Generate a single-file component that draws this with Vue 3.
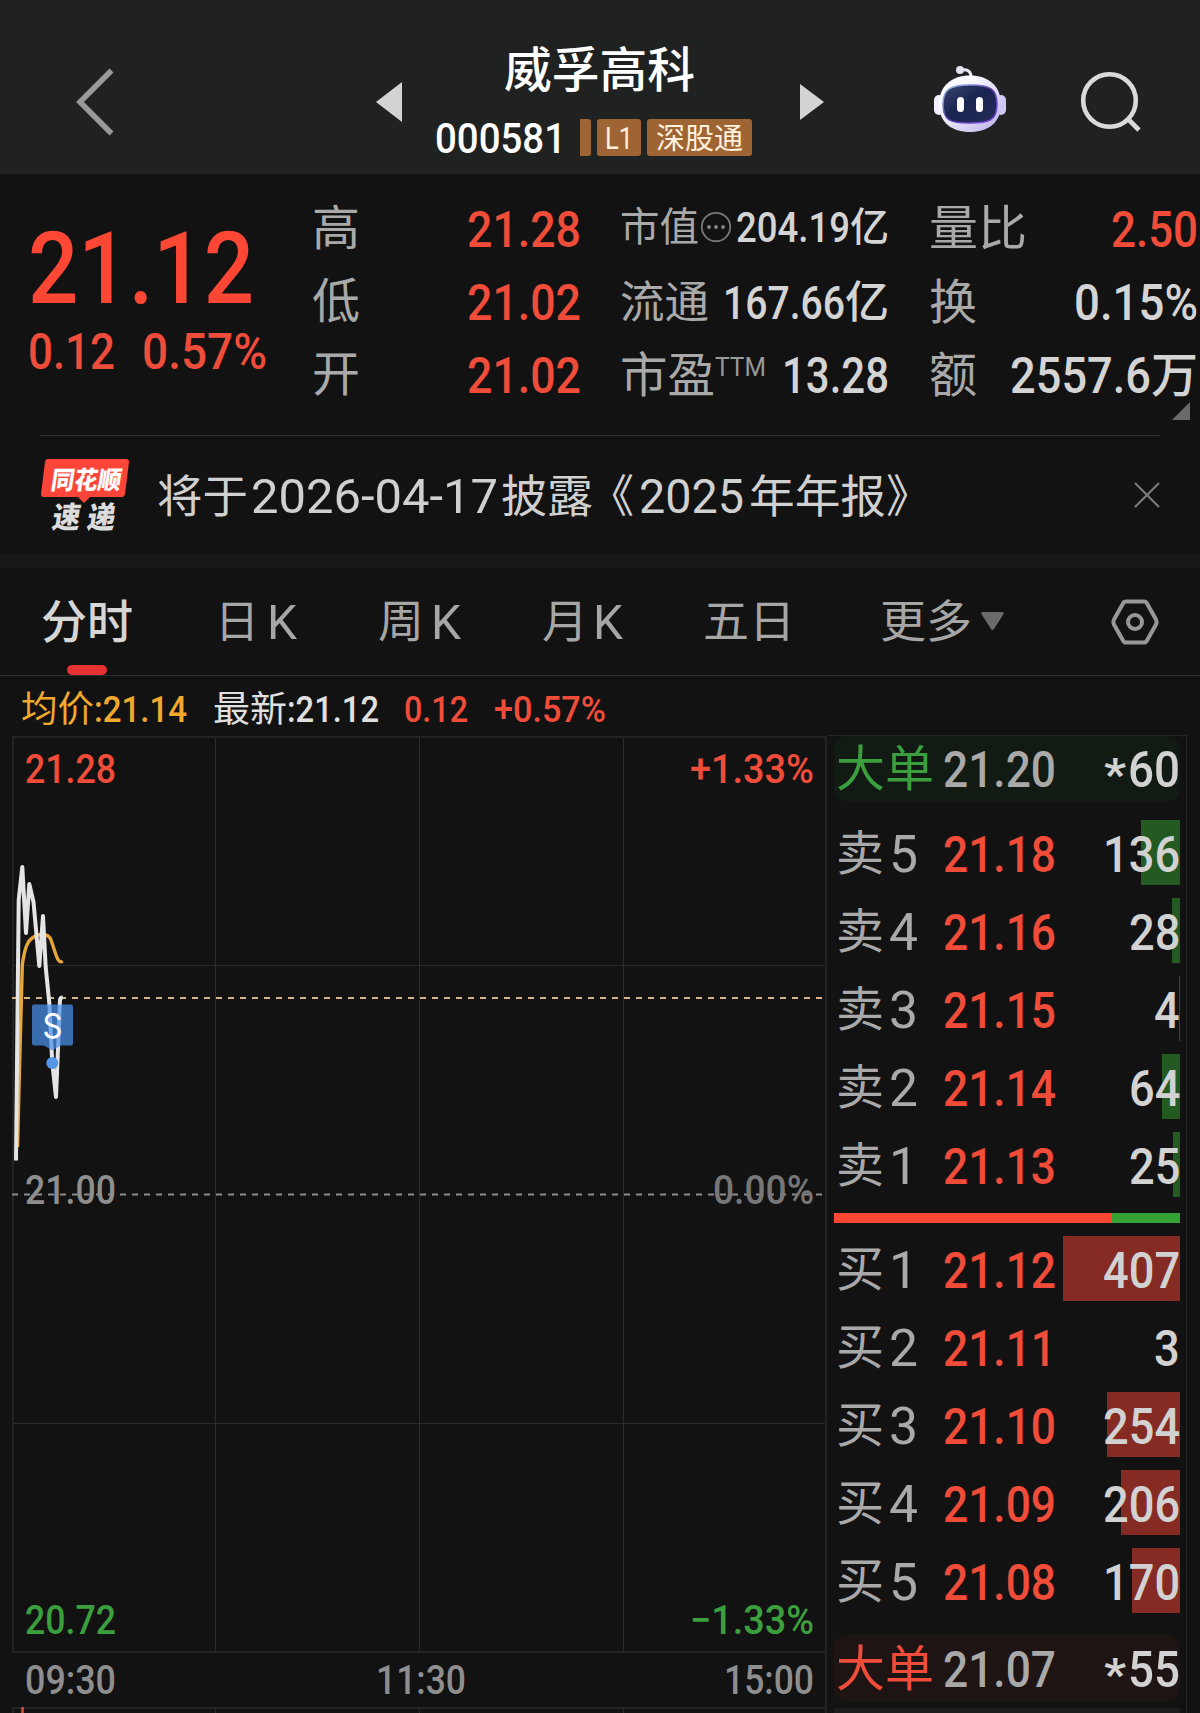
<script setup>
import { h } from 'vue'

// Text run fitted to a fixed advance width; its box bottom is the baseline.
const T = (p) => {
  const s = +p.s
  const hgt = Math.round(s * 0.72)
  return h('svg', { class: 't', width: p.w, height: hgt }, [
    h('text', {
      x: 0,
      y: hgt + +(p.dy || 0),
      'font-size': s,
      'font-weight': p.b || 400,
      textLength: p.w,
      lengthAdjust: 'spacingAndGlyphs',
    }, p.t),
  ])
}
T.props = ['t', 'w', 's', 'b', 'dy']

const range = [['高', '21.28'], ['低', '21.02'], ['开', '21.02']]

const asks = [
  { n: '5', price: '21.18', vol: '136', bar: 39 },
  { n: '4', price: '21.16', vol: '28', bar: 8 },
  { n: '3', price: '21.15', vol: '4', bar: 1 },
  { n: '2', price: '21.14', vol: '64', bar: 18 },
  { n: '1', price: '21.13', vol: '25', bar: 7 },
]
const bids = [
  { n: '1', price: '21.12', vol: '407', bar: 117 },
  { n: '2', price: '21.11', vol: '3', bar: 0 },
  { n: '3', price: '21.10', vol: '254', bar: 73 },
  { n: '4', price: '21.09', vol: '206', bar: 59 },
  { n: '5', price: '21.08', vol: '170', bar: 48 },
]
const sides = [
  { key: 'ask', name: '卖', rows: asks },
  { key: 'bid', name: '买', rows: bids },
]
const volWidth = (v) => v.length * 25.7

const axis = [
  { t: '21.28', x: 25, y: 783, w: 91, c: 'red' },
  { t: '+1.33%', x: 690, y: 783, w: 124, c: 'red' },
  { t: '21.00', x: 25, y: 1204, w: 91, c: 'mute' },
  { t: '0.00%', x: 713, y: 1204, w: 101, c: 'mute2' },
  { t: '20.72', x: 25, y: 1634, w: 91, c: 'green' },
  { t: '−1.33%', x: 690, y: 1634, w: 124, c: 'green' },
  { t: '09:30', x: 25, y: 1694, w: 91, c: 'mute' },
  { t: '11:30', x: 376, y: 1694, w: 90, c: 'mute' },
  { t: '15:00', x: 724, y: 1694, w: 90, c: 'mute' },
]
</script>

<template>
  <div class="page">
    <header class="top">
      <svg class="back" width="40" height="68" viewBox="0 0 40 68">
        <path d="M35.500 2.500 4 34l31.500 31.500" fill="none" stroke="#999" stroke-width="5.500" />
      </svg>
      <svg class="prev" width="26" height="40"><path d="M26 0v40L0 20z" fill="#d3d3d3" /></svg>
      <div class="stock">
        <div class="name"><T t="威孚高科" :w="191" :s="47.500" b="500" /></div>
        <div class="code">
          <T class="num" t="000581" :w="131" :s="42.500" b="500" />
          <i class="tag cut"></i>
          <span class="tag l1"><T t="L1" :w="28" :s="31" /></span>
          <span class="tag hk"><T t="深股通" :w="87" :s="29" dy="1" /></span>
        </div>
      </div>
      <svg class="next" width="24" height="36"><path d="M0 0v36L24 18z" fill="#d3d3d3" /></svg>
      <svg class="robot" width="72" height="66" viewBox="0 0 72 66">
        <defs>
          <linearGradient id="shell" x1="0" y1="0" x2="1" y2="1">
            <stop offset="0.3" stop-color="#fbfaff" /><stop offset="1" stop-color="#b9aeea" />
          </linearGradient>
          <linearGradient id="rim" x1="0" y1="0" x2="1" y2="1">
            <stop offset="0" stop-color="#a8d4f5" /><stop offset="0.5" stop-color="#5a3aa8" /><stop offset="1" stop-color="#7a4ff0" />
          </linearGradient>
          <linearGradient id="visor" x1="0" y1="0" x2="1" y2="1">
            <stop offset="0" stop-color="#3c4770" /><stop offset="0.45" stop-color="#1a2450" /><stop offset="1" stop-color="#262c58" />
          </linearGradient>
        </defs>
        <path d="M26 4.500C33 2.500 37 5 37 11" fill="none" stroke="#e9e7f5" stroke-width="3" />
        <circle cx="26" cy="4" r="4" fill="#e4e2f2" />
        <rect x="0" y="29" width="10" height="20" rx="5" fill="#f2f0ff" />
        <rect x="62" y="29" width="10" height="20" rx="5" fill="#cfc8f4" />
        <path d="M36 9.500c18 0 31 10 31 29 0 18-13 27.500-31 27.500S5 56.500 5 38.500c0-19 13-29 31-29z" fill="url(#shell)" />
        <path d="M36 19c20 0 27 4 27 19.500S56 57 36 57 9 54 9 38.500 16 19 36 19z" fill="url(#visor)" stroke="url(#rim)" stroke-width="1.500" />
        <rect x="23" y="31" width="7" height="15" rx="3.500" fill="#fff" />
        <rect x="42" y="31" width="7" height="15" rx="3.500" fill="#fff" />
      </svg>
      <svg class="search" width="62" height="62" viewBox="0 0 62 62">
        <circle cx="29.500" cy="29.500" r="26.300" fill="none" stroke="#dadada" stroke-width="4.600" />
        <path d="M48 48l11 11" stroke="#dadada" stroke-width="4.600" />
      </svg>
    </header>

    <section class="quote">
      <div class="last">
        <div class="big"><T t="21.12" :w="226" :s="100" b="500" /></div>
        <div class="chg"><T t="0.12" :w="87" :s="50" b="500" /><T t="0.57%" :w="125" :s="50" b="500" /></div>
      </div>
      <div class="col">
        <div v-for="r in range" :key="r[0]" class="row">
          <T class="lab" :t="r[0]" :w="48" :s="48" dy="-2" />
          <T class="red" :t="r[1]" :w="114" :s="50.500" b="500" />
        </div>
      </div>
      <div class="col">
        <div class="row up">
          <T class="lab" t="市值" :w="79" :s="40" dy="-1" />
          <svg class="dots" width="32" height="32" viewBox="0 0 32 32">
            <circle cx="16" cy="16" r="14.200" fill="none" stroke="#777" stroke-width="1.800" />
            <g fill="#888"><circle cx="9" cy="16" r="1.900" /><circle cx="16" cy="16" r="1.900" /><circle cx="23" cy="16" r="1.900" /></g>
          </svg>
          <T class="val" t="204.19" :w="114" :s="43" b="500" /><T class="val" t="亿" :w="39" :s="39.500" dy="-1" b="500" />
        </div>
        <div class="row up2">
          <T class="lab" t="流通" :w="89" :s="44" dy="-1" />
          <span class="pair"><T class="val" t="167.66" :w="122" :s="47" b="500" /><T class="val" t="亿" :w="44" :s="44" dy="-1" b="500" /></span>
        </div>
        <div class="row">
          <span class="pair"><T class="lab" t="市盈" :w="95" :s="48" dy="-1" /><T class="ttm" t="TTM" :w="51" :s="25.500" /></span>
          <T class="val" t="13.28" :w="107" :s="50.500" b="500" />
        </div>
      </div>
      <div class="col">
        <div class="row"><T class="lab" t="量比" :w="98" :s="48" dy="-2" /><T class="red" t="2.50" :w="87" :s="50.500" b="500" /></div>
        <div class="row"><T class="lab" t="换" :w="48" :s="48" dy="-1" /><T class="val" t="0.15%" :w="124" :s="50.500" b="500" /></div>
        <div class="row"><T class="lab" t="额" :w="48" :s="48" dy="-1" /><span class="pair"><T class="val" t="2557.6" :w="141" :s="50.500" b="500" /><T class="val wan" t="万" :w="47" :s="48" dy="-1" b="500" /></span></div>
        <svg class="corner" width="18" height="18"><path d="M18 0v18H0z" fill="#6a6a6a" /></svg>
      </div>
    </section>

    <section class="news">
      <svg class="logo" width="88" height="76" viewBox="0 0 88 76">
        <path d="M7 0h78q3 0 3 3l-4 32q-.500 3-3 3H49l-6 6-6-6H3q-3 0-3-3L4 3q.500-3 3-3z" fill="#fb4538" />
        <text transform="translate(9 30) skewX(-9)" font-size="25" font-weight="900" textLength="70" lengthAdjust="spacingAndGlyphs" fill="#fff">同花顺</text>
        <g fill="#dcdcdc" font-size="30" font-weight="900">
          <text transform="translate(10 69) skewX(-9)" textLength="28" lengthAdjust="spacingAndGlyphs">速</text>
          <text transform="translate(45 69) skewX(-9)" textLength="28" lengthAdjust="spacingAndGlyphs">递</text>
        </g>
      </svg>
      <div class="headline">
        <T t="将于" :w="91" :s="45" /><T class="date" t="2026-04-17" :w="247" :s="48" /><T t="披露" :w="92" :s="45" />
        <T class="open" t="《" :w="45" :s="45" /><T class="year" t="2025" :w="105" :s="48" /><T class="rep" t="年年报" :w="137" :s="45" /><T t="》" :w="45" :s="45" />
      </div>
      <svg class="close" width="26" height="26"><path d="M1 1l24 24M25 1 1 25" stroke="#7a7a7a" stroke-width="2.200" /></svg>
    </section>

    <nav class="tabs">
      <div class="tab on"><T t="分时" :w="92" :s="46" dy="-1" b="500" /><i></i></div>
      <div class="tab t2"><T t="日" :w="44" :s="45" dy="-1" /><T t="K" :w="30" :s="49" /></div>
      <div class="tab t3"><T t="周" :w="46" :s="45" dy="-1" /><T t="K" :w="30" :s="49" /></div>
      <div class="tab t4"><T t="月" :w="46" :s="45" dy="-1" /><T t="K" :w="30" :s="49" /></div>
      <div class="tab t5"><T t="五日" :w="92" :s="45" dy="-1" /></div>
      <div class="tab t6"><T t="更多" :w="92" :s="45" dy="-1" /></div>
      <svg class="caret" width="23" height="19"><path d="M2 0h19q3 0 1 3l-9 14q-1.500 2-3 0L1 3q-2-3 1-3z" fill="#6a6a6a" /></svg>
      <svg class="gear" width="48" height="48" viewBox="0 0 48 48" fill="none" stroke="#979797" stroke-width="4">
        <path d="M15 3.500h18q2 0 3 2l9 16q1.200 2.500 0 5l-9 16q-1 2-3 2H15q-2 0-3-2l-9-16q-1.200-2.500 0-5l9-16q1-2 3-2z" />
        <circle cx="24" cy="24" r="7" />
      </svg>
    </nav>

    <div class="info">
      <span class="pair avg"><T t="均价" :w="73" :s="36.500" /><T t=":21.14" :w="93" :s="37.500" b="500" /></span>
      <span class="pair now"><T t="最新" :w="74" :s="36.500" /><T t=":21.12" :w="92" :s="37.500" b="500" /></span>
      <T class="red d1" t="0.12" :w="64" :s="37.500" b="500" />
      <T class="red d2" t="+0.57%" :w="112" :s="37.500" b="500" />
    </div>

    <main class="body">
      <svg class="chart" width="827" height="978" viewBox="0 735 827 978">
        <g stroke="#2c2c2c" stroke-width="1" fill="none">
          <path d="M13 965.500H826M13 1423.500H826M215.500 737V1652M419.500 737V1652M623.500 737V1652M215.500 1708V1713M419.500 1708V1713M623.500 1708V1713" />
        </g>
        <path d="M12 737H827M13 736V1652M12 1652H827M826 736V1713M12 1708H827M13 1708V1713" stroke="#232323" stroke-width="2" fill="none" />
        <path d="M22.500 1707v6" stroke="#d8503f" stroke-width="2.500" />
        <path d="M12 998H823" stroke="#d3b287" stroke-width="2" stroke-dasharray="6 6" />
        <path d="M12 1194.500H823" stroke="#8c8c8c" stroke-width="2" stroke-dasharray="6 6" />
        <text v-for="a in axis" :key="a.t" :class="a.c" :x="a.x" :y="a.y" font-size="40.500" font-weight="500" :textLength="a.w" lengthAdjust="spacingAndGlyphs">{{ a.t }}</text>
        <path d="M17.500 1147 20 1050 22.300 965Q25 945 30 940T41.500 934.500Q49 934 51 940T56 955 62.700 961" fill="none" stroke="#e5a63a" stroke-width="3.400" />
        <path d="M16 1160.500 18.700 900 22.300 867 26 933 29.300 884 33.500 902 39.300 966 43 916 45.700 967 49.300 1003 52.300 1063 56 1097 60 1000Q60.300 997.500 62.700 997.500" fill="none" stroke="#e4e4e4" stroke-width="4" stroke-linejoin="round" />
        <path d="M34 1004.500h37q2 0 2 2v37q0 2-2 2H61l-8.500 5-8.500-5H34q-2 0-2-2v-37q0-2 2-2z" fill="#4a90ea" fill-opacity="0.72" />
        <circle cx="52.300" cy="1063" r="6" fill="#5596e6" />
        <text class="s" x="42.500" y="1037.500" font-size="34" textLength="20" lengthAdjust="spacingAndGlyphs">S</text>
      </svg>

      <aside class="book">
        <div class="large sell">
          <T class="green" t="大单" :w="98" :s="48.500" dy="-1" /><T class="p" t="21.20" :w="113" :s="50.500" b="500" />
          <span class="pair v"><T class="star" t="*" :w="22" :s="44" b="700" /><T t="60" :w="52" :s="50.500" b="500" /></span>
        </div>
        <template v-for="g in sides" :key="g.key">
          <div :class="['levels', g.key]">
            <div v-for="r in g.rows" :key="r.n" class="level">
              <i class="bar" :style="{ width: r.bar + 'px' }"></i>
              <T class="nm" :t="g.name" :w="48" :s="48" dy="-2" /><T class="nm" :t="r.n" :w="29" :s="52" />
              <T class="red p" :t="r.price" :w="113" :s="50.500" b="500" />
              <T class="v" :t="r.vol" :w="volWidth(r.vol)" :s="50.500" b="500" />
            </div>
          </div>
          <div v-if="g.key === 'ask'" class="ratio"><i></i></div>
        </template>
        <div class="large buy">
          <T class="red" t="大单" :w="98" :s="48.500" dy="-1" /><T class="p" t="21.07" :w="113" :s="50.500" b="500" />
          <span class="pair v"><T class="star" t="*" :w="22" :s="44" b="700" /><T t="55" :w="52" :s="50.500" b="500" /></span>
        </div>
        <div class="tail"></div>
      </aside>
    </main>
  </div>
</template>

<style>
body { margin: 0; background: #121212; }
.t { display: block; flex: none; overflow: visible; fill: currentColor; }
</style>

<style scoped>
.page { width: 1200px; height: 1713px; overflow: hidden; background: #121212; color: #d2d2d2; font-family: Roboto, "Noto Sans CJK SC", sans-serif; }
svg { display: block; flex: none; }
.red { color: #f04c3a; fill: #f04c3a; }
.green { color: #3a9f3c; fill: #3a9f3c; }
.mute { fill: #8e8e8e; }
.mute2 { fill: #777; }
.lab { color: #a9a9a9; }
.val { color: #d4d4d4; }
.pair { display: flex; align-items: flex-end; }

.top { display: flex; align-items: flex-start; height: 174px; background: #202221; }
.back { margin: 68px 0 0 76px; }
.prev { margin: 82px 0 0 260px; }
.stock { width: 320px; margin-left: 32px; color: #fff; }
.name { display: flex; height: 87px; align-items: flex-end; padding-left: 70px; }
.code { display: flex; height: 37px; margin-top: 32px; }
.code .num { margin: 3px 0 0 1px; }
.tag { display: flex; align-items: flex-end; box-sizing: border-box; height: 37px; margin-left: 6px; background: #9e6434; color: #fff1dc; border-radius: 3px; }
.tag.cut { width: 11px; margin-left: 14px; border-radius: 0 3px 3px 0; }
.tag.l1 { width: 44px; padding: 0 0 7px 8px; }
.tag.hk { width: 105px; padding: 0 0 8px 9px; }
.next { margin: 84px 0 0 46px; }
.robot { margin: 66px 0 0 110px; }
.search { margin: 71px 0 0 74px; }

.quote { display: flex; height: 261px; }
.last { width: 284px; padding-left: 28px; color: #fc4735; }
.big { display: flex; align-items: flex-end; height: 129px; }
.chg { display: flex; align-items: flex-end; gap: 27px; height: 66px; color: #ef4d3c; }
.col { width: 269px; margin-right: 39px; }
.col:last-child { margin-right: 0; margin-left: 1px; }
.row { display: flex; justify-content: space-between; align-items: flex-end; height: 73px; }
.row.up, .row.up2 { box-sizing: border-box; }
.row.up { padding-bottom: 5px; justify-content: flex-start; }
.row.up2 { padding-bottom: 1px; }
.dots { margin: 0 4px -1px 1px; }
.ttm { color: #999; margin-bottom: 17px; }
.corner { margin: 9px 0 0 243px; }

.news { position: relative; display: flex; align-items: flex-start; height: 120px; border-bottom: 13px solid #171717; }
.news::before { content: ""; position: absolute; left: 40px; right: 40px; top: 0; height: 1px; background: #303030; }
.logo { margin: 24px 0 0 41px; }
.headline { display: flex; align-items: flex-end; height: 78px; margin-left: 28px; color: #d0d0d0; }
.date { margin: 0 3px; }
.open { margin-left: -4px; }
.year { margin-left: 5px; }
.rep { margin-left: 5px; }
.close { margin: 47px 0 0 203px; }

.tabs { display: flex; align-items: flex-start; height: 107px; border-bottom: 1px solid #303030; color: #a6a6a6; }
.tab { position: relative; display: flex; align-items: flex-end; height: 71px; }
.tab.on { margin-left: 41px; color: #d6d6d6; }
.tab.on i { position: absolute; left: 26px; top: 97px; width: 40px; height: 10px; border-radius: 5px; background: #e63232; }
.t2 { margin-left: 82px; gap: 8px; }
.t3 { margin-left: 81px; gap: 7px; }
.t4 { margin-left: 81px; gap: 5px; }
.t5 { margin-left: 80px; }
.t6 { margin-left: 85px; }
.caret { margin: 44px 0 0 9px; }
.gear { margin: 30px 0 0 107px; }

.info { display: flex; align-items: flex-end; height: 46px; padding-bottom: 13px; }
.avg { margin-left: 21px; color: #f0a92c; }
.now { margin-left: 26px; color: #e0e0e0; }
.d1 { margin-left: 25px; }
.d2 { margin-left: 26px; }

.body { display: flex; height: 978px; }
.s { fill: #fff; font-family: Inter, sans-serif; }
.book { box-sizing: border-box; width: 360px; height: 978px; padding: 0 6px 0 7px; border-top: 1px solid #242424; border-right: 1px solid #242424; }
.large { display: flex; align-items: flex-end; box-sizing: border-box; height: 65px; padding: 0 0 14px 2px; border-radius: 12px; }
.large .p { margin-left: 9px; color: #a9a9a9; }
.large .v, .level .v { margin-left: auto; }
.large .star { margin: 0 2px -3px 0; }
.sell { background: #121a14; }
.buy { margin-top: 15px; height: 66px; background: #1e1413; }
.ask { padding-top: 13px; }
.bid { padding-top: 7px; }
.level { position: relative; display: flex; align-items: flex-end; box-sizing: border-box; height: 78px; padding: 0 0 20px 2px; }
.level .t { position: relative; }
.bar { position: absolute; right: 0; top: 6px; height: 65px; background: #225a22; }
.bid .bar { background: #852b23; }
.nm { color: #a9a9a9; }
.nm + .nm { margin-left: 5px; }
.level .p { margin-left: 25px; }
.ratio { height: 10px; margin-top: 9px; background: #33a133; }
.ratio i { display: block; width: 278px; height: 10px; background: #ff4733; }
.tail { height: 6px; margin-top: 7px; background: #1c1c1c; }
</style>
